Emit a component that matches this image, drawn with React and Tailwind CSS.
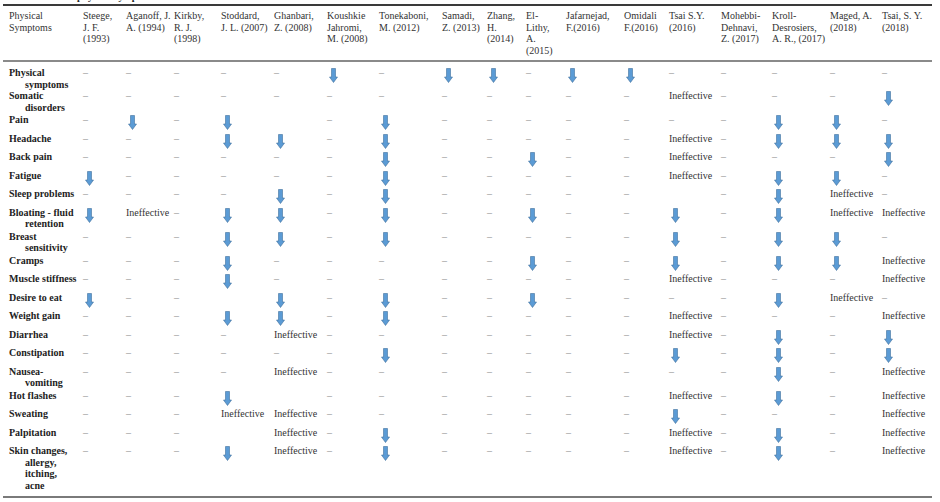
import React from "react";

const cols = [
  { w: "w-[80px]", lines: ["Physical", "Symptoms"] },
  { w: "w-[43px]", lines: ["Steege,", "J. F.", "(1993)"] },
  { w: "w-[48px]", lines: ["Aganoff, J.", "A. (1994)"] },
  { w: "w-[47px]", lines: ["Kirkby,", "R. J.", "(1998)"] },
  { w: "w-[53px]", lines: ["Stoddard,", "J. L. (2007)"] },
  { w: "w-[53px]", lines: ["Ghanbari,", "Z. (2008)"] },
  { w: "w-[52px]", lines: ["Koushkie", "Jahromi,", "M. (2008)"] },
  { w: "w-[63px]", lines: ["Tonekaboni,", "M. (2012)"] },
  { w: "w-[45px]", lines: ["Samadi,", "Z. (2013)"] },
  { w: "w-[39px]", lines: ["Zhang,", "H.", "(2014)"] },
  { w: "w-[40px]", lines: ["El-", "Lithy,", "A.", "(2015)"] },
  { w: "w-[58px]", lines: ["Jafarnejad,", "F.(2016)"] },
  { w: "w-[45px]", lines: ["Omidali", "F.(2016)"] },
  { w: "w-[52px]", lines: ["Tsai S.Y.", "(2016)"] },
  { w: "w-[51px]", lines: ["Mohebbi-", "Dehnavi,", "Z. (2017)"] },
  { w: "w-[58px]", lines: ["Kroll-", "Desrosiers,", "A. R., (2017)"] },
  { w: "w-[52px]", lines: ["Maged, A.", "(2018)"] },
  { w: "w-[50px]", lines: ["Tsai, S. Y.", "(2018)"] },
];

// v = arrow down, - = no data, I = ineffective, _ = empty
const rows = [
  { h: "h-[29px]", label: ["Physical", "symptoms"], d: "- - - - - v - v v - v v - - - - -" },
  { h: "h-[24px]", label: ["Somatic", "disorders"], d: "- - - - - - - - - - - - I - - - v" },
  { h: "h-[18.5px]", label: ["Pain"], d: "- v - v _ - v - - - - - - - v v -" },
  { h: "h-[18.5px]", label: ["Headache"], d: "- - - v v - v - - - - - I - v v v" },
  { h: "h-[18.5px]", label: ["Back pain"], d: "- - - - - - v - - v - - I - - - v" },
  { h: "h-[18.5px]", label: ["Fatigue"], d: "v - - - - - v - - - - - I - v v -" },
  { h: "h-[18.5px]", label: ["Sleep problems"], d: "- - - - v - v - - - - - _ - v I -" },
  { h: "h-[24px]", label: ["Bloating - fluid", "retention"], d: "v I - v v - v - - v - - v - v I I" },
  { h: "h-[24px]", label: ["Breast", "sensitivity"], d: "- - - v v - v - - - - - v - v v -" },
  { h: "h-[18.5px]", label: ["Cramps"], d: "- - - v - - - - - v - - v - v v I" },
  { h: "h-[18.5px]", label: ["Muscle stiffness"], d: "- - - v - - - - - - - - I - - - I" },
  { h: "h-[18.5px]", label: ["Desire to eat"], d: "v - - _ v - v - - v - - - - v I -" },
  { h: "h-[18.5px]", label: ["Weight gain"], d: "- - - v v - v - - - - - I - - - I" },
  { h: "h-[18.5px]", label: ["Diarrhea"], d: "- - - - I - - - - - - - I - v - v" },
  { h: "h-[18.5px]", label: ["Constipation"], d: "- - - - - - v - - - - - v - v - v" },
  { h: "h-[24px]", label: ["Nausea-", "vomiting"], d: "- - - - I - - - - - - - - - v - I" },
  { h: "h-[18.5px]", label: ["Hot flashes"], d: "- - - v _ - - - - - - - I - v - I" },
  { h: "h-[18.5px]", label: ["Sweating"], d: "- - - I I - - - - - - - v - - - I" },
  { h: "h-[18.5px]", label: ["Palpitation"], d: "- - - _ I - v - - - - - I - v - I" },
  { h: "h-[52px]", label: ["Skin changes,", "allergy,", "itching,", "acne"], d: "- - - v I - v - - - - - I - v - I" },
];

function Arrow() {
  return (
    <svg width="9" height="15" viewBox="0 0 9 15" className="block ml-[2px] mt-[1px]">
      <polygon
        points="2.5,0.5 6.5,0.5 6.5,9 8.5,9 4.5,14.5 0.5,9 2.5,9"
        fill="#5b9bd5"
        stroke="#41719c"
        strokeWidth="0.6"
      />
    </svg>
  );
}

function Value({ v }) {
  if (v === "v")
    return (
      <div className="h-[11.5px]">
        <Arrow />
      </div>
    );
  if (v === "-") return <span className="text-[#8c8c8c]">–</span>;
  if (v === "I") return <span className="text-[#333]">Ineffective</span>;
  return null;
}

function Lines({ lines }) {
  return lines.map((l, i) => (
    <React.Fragment key={i}>
      {i > 0 && <br />}
      {l}
    </React.Fragment>
  ));
}

export default function App() {
  return (
    <div className="w-[940px] h-[502px] bg-white overflow-hidden font-['Liberation_Serif',serif] text-[10px] leading-[11.5px] text-[#222]">
      <div className="h-[4px] overflow-hidden">
        <div className="-mt-[9px] pl-[77px] font-bold">physical symptoms</div>
      </div>
      <table className="ml-[3px] w-[929px] table-fixed border-collapse">
        <colgroup>
          {cols.map((c, i) => (
            <col key={i} className={c.w} />
          ))}
        </colgroup>
        <thead>
          <tr className="border-t-2 border-t-[#3a3a3a] border-b-2 border-b-[#8a8a8a]">
            {cols.map((c, i) => (
              <th
                key={i}
                className={`align-top text-left font-normal whitespace-nowrap pt-[4px] pb-[4px] h-[54px] text-[#333] ${
                  i === 0 ? "pl-[6px]" : "pl-0"
                }`}
              >
                <Lines lines={c.lines} />
              </th>
            ))}
          </tr>
        </thead>
        <tbody>
          {rows.map((r, ri) => {
            const vals = r.d.split(" ");
            const pt = ri === 0 ? "pt-[5px]" : "pt-0";
            return (
              <tr
                key={ri}
                className={`${r.h} ${ri === rows.length - 1 ? "border-b-2 border-b-[#7a7a7a]" : ""}`}
              >
                <td className={`align-top p-0 pl-[22px] [text-indent:-16px] font-bold whitespace-nowrap ${pt}`}>
                  <Lines lines={r.label} />
                </td>
                {vals.map((v, i) => (
                  <td key={i} className={`align-top p-0 whitespace-nowrap ${pt}`}>
                    <Value v={v} />
                  </td>
                ))}
              </tr>
            );
          })}
        </tbody>
      </table>
    </div>
  );
}
